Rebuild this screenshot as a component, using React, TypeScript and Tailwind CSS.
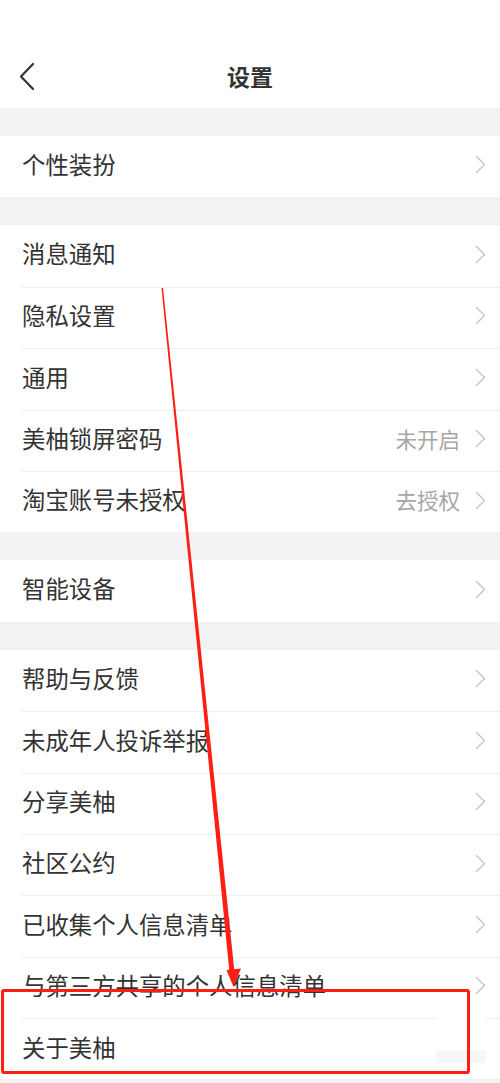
import React from "react";

type Row = { label: string; right?: string; noChevron?: boolean };

const Chevron = () => (
  <svg width="11" height="19" viewBox="0 0 11 19" className="shrink-0">
    <path d="M1.5 1.5 L9.5 9.5 L1.5 17.5" fill="none" stroke="#c9c9c9" strokeWidth="1.6" strokeLinecap="round" strokeLinejoin="round" />
  </svg>
);

const Group = ({ rows }: { rows: Row[] }) => (
  <div className="bg-white flex flex-col">
    {rows.map((r, i) => (
      <div key={r.label} className="h-[61.4px] pl-[21px]">
        <div className={`h-full flex items-center pl-[1px] pr-[14px] pb-[4px] ${i > 0 ? "border-t border-[#efefef]" : ""}`}>
          <span className="flex-1 text-[23.4px] text-[#333333] leading-none">{r.label}</span>
          {r.right && <span className="text-[21.5px] text-[#a6a6a6] leading-none mr-[15px]">{r.right}</span>}
          {!r.noChevron && <Chevron />}
        </div>
      </div>
    ))}
  </div>
);

const Gap = () => <div className="h-[28px] bg-[#f2f2f2]" />;

export default function App() {
  return (
    <div className="relative w-[500px] h-[1083px] overflow-hidden bg-white flex flex-col" style={{ fontFamily: '"Noto Sans CJK SC", "Noto Sans", sans-serif' }}>
      <div className="h-[108px] grid grid-cols-[1fr_auto_1fr] items-center pt-[46px] px-[17px]">
        <svg width="20" height="30" viewBox="0 0 20 30">
          <path d="M16 2 L4 14.5 L16 27" fill="none" stroke="#333" strokeWidth="2.2" strokeLinecap="round" strokeLinejoin="round" />
        </svg>
        <span className="text-[23px] font-bold text-[#333333] leading-none pb-[2px]">设置</span>
        <span />
      </div>
      <Gap />
      <Group rows={[{ label: "个性装扮" }]} />
      <Gap />
      <Group
        rows={[
          { label: "消息通知" },
          { label: "隐私设置" },
          { label: "通用" },
          { label: "美柚锁屏密码", right: "未开启" },
          { label: "淘宝账号未授权", right: "去授权" },
        ]}
      />
      <Gap />
      <Group rows={[{ label: "智能设备" }]} />
      <Gap />
      <Group
        rows={[
          { label: "帮助与反馈" },
          { label: "未成年人投诉举报" },
          { label: "分享美柚" },
          { label: "社区公约" },
          { label: "已收集个人信息清单" },
          { label: "与第三方共享的个人信息清单" },
          { label: "关于美柚", noChevron: true },
        ]}
      />
      <div className="flex-1 bg-[#f2f2f2]" />

      {/* overlay patches from the screenshot */}
      <div className="absolute left-[436px] top-[1016px] w-[50px] h-[3px] bg-white" />
      <div className="absolute left-[436px] top-[1050px] w-[50px] h-[13px] bg-[#f7f7f7]" />

      {/* red annotation box */}
      <div className="absolute left-[1px] top-[989px] w-[469px] h-[85px] border-[3px] border-[#ff1e12] rounded-[3px]" />

      {/* red annotation arrow */}
      <svg className="absolute inset-0 pointer-events-none" width="500" height="1083" viewBox="0 0 500 1083">
        <polygon points="161.5,288 163,288 234.5,972 229.5,972.5" fill="#ff1e12" />
        <polygon points="226.5,970 241,968.5 233.5,987" fill="#ff1e12" />
      </svg>
    </div>
  );
}
